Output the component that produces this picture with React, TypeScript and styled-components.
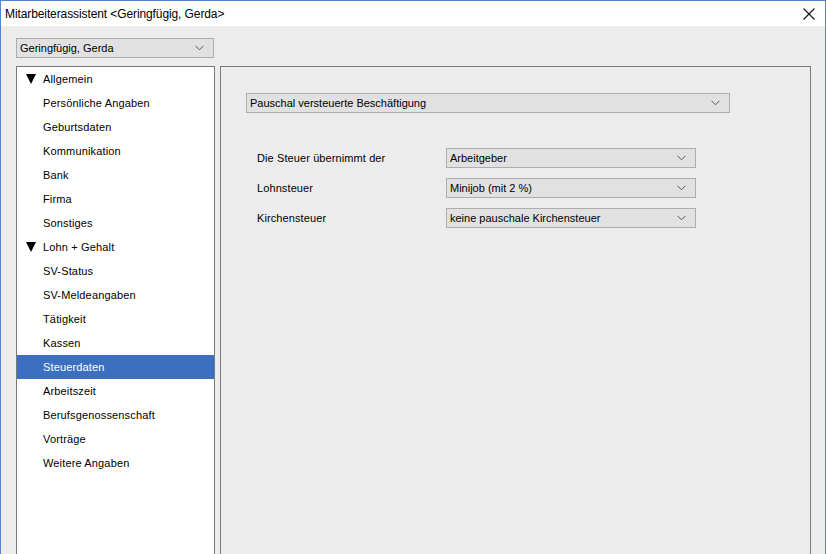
import styled, { createGlobalStyle } from "styled-components";

const GlobalStyle = createGlobalStyle`
  body {
    margin: 0;
    font-family: "Liberation Sans", Arial, sans-serif;
    color: #000;
  }
`;

const Window = styled.div`
  width: 826px;
  height: 554px;
  box-sizing: border-box;
  border: 1px solid #4f86d2;
  border-bottom: none;
  display: flex;
  flex-direction: column;
  overflow: hidden;
  background-color: #ececec;
`;

const TitleBar = styled.div`
  height: 25px;
  flex-shrink: 0;
  display: flex;
  align-items: center;
  justify-content: space-between;
  padding: 0 10px 0 4px;
  background-color: #fff;
  font-size: 12px;
  letter-spacing: -0.1px;
`;

const CloseButton = styled.svg`
  width: 12px;
  height: 12px;
  margin-top: 1px;
`;

const Body = styled.div`
  flex: 1;
  display: flex;
  flex-direction: column;
  gap: 8px;
  padding: 12px 14px 0 15px;
  min-height: 0;
`;

const Select = styled.div<{ $width: number }>`
  width: ${(p) => p.$width}px;
  height: 20px;
  box-sizing: border-box;
  display: flex;
  align-items: center;
  justify-content: space-between;
  padding: 0 9px 0 3px;
  background-color: #e1e1e1;
  border: 1px solid #adadad;
  font-size: 11px;
  flex-shrink: 0;
`;

const Chevron = () => (
  <svg width="9" height="6" viewBox="0 0 9 6">
    <path d="M0.5 0.8 L4.5 4.8 L8.5 0.8" fill="none" stroke="#555" strokeWidth="1" />
  </svg>
);

const Main = styled.div`
  flex: 1;
  display: flex;
  gap: 5px;
  min-height: 0;
`;

const Tree = styled.ul`
  width: 199px;
  box-sizing: border-box;
  margin: 0;
  padding: 0;
  list-style: none;
  background-color: #fff;
  border: 1px solid #7a7a7a;
  border-bottom: none;
`;

const TreeItem = styled.li<{ $selected?: boolean }>`
  height: 24px;
  display: flex;
  align-items: center;
  padding-left: 9px;
  font-size: 11px;
  letter-spacing: 0.15px;
  background-color: ${(p) => (p.$selected ? "#3d6fc1" : "transparent")};
  color: ${(p) => (p.$selected ? "#fff" : "#000")};
`;

const Arrow = styled.svg`
  width: 17px;
  height: 10px;
  flex-shrink: 0;
`;

const Label = styled.span<{ $indent?: boolean }>`
  margin-left: ${(p) => (p.$indent ? "17px" : "0")};
`;

const Panel = styled.div`
  flex: 1;
  box-sizing: border-box;
  border: 1px solid #7a7a7a;
  border-bottom: none;
  padding: 26px 0 0 25px;
  display: flex;
  flex-direction: column;
  gap: 35px;
`;

const Form = styled.div`
  display: flex;
  flex-direction: column;
  gap: 10px;
  padding-left: 11px;
`;

const Row = styled.div`
  display: flex;
  align-items: center;
`;

const FieldLabel = styled.span`
  width: 189px;
  font-size: 11px;
  letter-spacing: 0.1px;
`;

const treeItems: { label: string; header?: boolean }[] = [
  { label: "Allgemein", header: true },
  { label: "Persönliche Angaben" },
  { label: "Geburtsdaten" },
  { label: "Kommunikation" },
  { label: "Bank" },
  { label: "Firma" },
  { label: "Sonstiges" },
  { label: "Lohn + Gehalt", header: true },
  { label: "SV-Status" },
  { label: "SV-Meldeangaben" },
  { label: "Tätigkeit" },
  { label: "Kassen" },
  { label: "Steuerdaten" },
  { label: "Arbeitszeit" },
  { label: "Berufsgenossenschaft" },
  { label: "Vorträge" },
  { label: "Weitere Angaben" },
];

const fields = [
  { label: "Die Steuer übernimmt der", value: "Arbeitgeber" },
  { label: "Lohnsteuer", value: "Minijob (mit 2 %)" },
  { label: "Kirchensteuer", value: "keine pauschale Kirchensteuer" },
];

const App = () => {
  return (
    <>
      <GlobalStyle />
      <Window>
        <TitleBar>
          <span>Mitarbeiterassistent &lt;Geringfügig, Gerda&gt;</span>
          <CloseButton viewBox="0 0 12 12">
            <path d="M0.5 0.5 L11.5 11.5 M11.5 0.5 L0.5 11.5" stroke="#111" strokeWidth="1.1" />
          </CloseButton>
        </TitleBar>
        <Body>
          <Select $width={198}>
            <span>Geringfügig, Gerda</span>
            <Chevron />
          </Select>
          <Main>
            <Tree>
              {treeItems.map((item) => (
                <TreeItem key={item.label} $selected={item.label === "Steuerdaten"}>
                  {item.header && (
                    <Arrow viewBox="0 0 17 10">
                      <path d="M0 0 H10 L5 10 Z" fill="#000" />
                    </Arrow>
                  )}
                  <Label $indent={!item.header}>{item.label}</Label>
                </TreeItem>
              ))}
            </Tree>
            <Panel>
              <Select $width={484}>
                <span>Pauschal versteuerte Beschäftigung</span>
                <Chevron />
              </Select>
              <Form>
                {fields.map((f) => (
                  <Row key={f.label}>
                    <FieldLabel>{f.label}</FieldLabel>
                    <Select $width={250}>
                      <span>{f.value}</span>
                      <Chevron />
                    </Select>
                  </Row>
                ))}
              </Form>
            </Panel>
          </Main>
        </Body>
      </Window>
    </>
  );
};

export default App;
